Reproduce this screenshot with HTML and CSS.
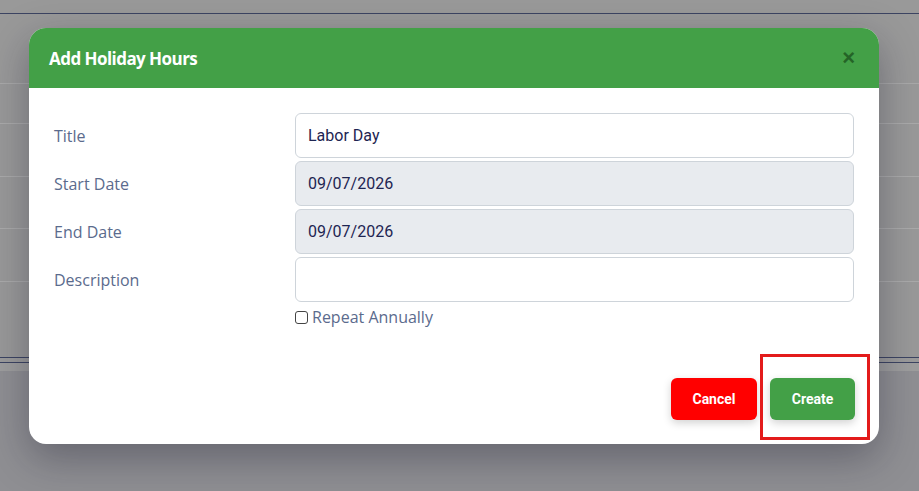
FILE: index.html
```html
<!DOCTYPE html>
<html lang="en">
<head>
<meta charset="utf-8">
<title>Add Holiday Hours</title>
<link rel="stylesheet" href="styles.css">
</head>
<body>
<div class="backdrop">
  <div class="bg-top"></div>
  <div class="bg-gap"></div>
  <div class="bg-row r1"></div>
  <div class="bg-row r2"></div>
  <div class="bg-row r3"></div>
  <div class="bg-row r4"></div>
  <div class="bg-row r5"></div>
  <div class="bg-foot"></div>
  <div class="bg-rest"></div>
</div>

<div class="modal">
  <div class="modal-header">
    <h1 class="modal-title">Add Holiday Hours</h1>
    <span class="close">&times;</span>
  </div>
  <div class="modal-body">
    <div class="form-grid">
      <label class="label">Title</label>
      <div class="input">Labor Day</div>
      <label class="label">Start Date</label>
      <div class="input disabled">09/07/2026</div>
      <label class="label">End Date</label>
      <div class="input disabled">09/07/2026</div>
      <label class="label">Description</label>
      <div class="input"></div>
      <span></span>
      <div class="check-row"><span class="checkbox"></span><span class="check-label">Repeat Annually</span></div>
    </div>
  </div>
  <div class="modal-footer">
    <button class="btn btn-cancel">Cancel</button>
    <button class="btn btn-create">Create</button>
  </div>
</div>

<div class="highlight"></div>
</body>
</html>
```

FILE: styles.css
```css
* { box-sizing: border-box; }
html, body { margin: 0; padding: 0; }
body {
  width: 919px;
  height: 491px;
  overflow: hidden;
  background: #8f8f93;
  font-family: "Open Sans", "Noto Sans", sans-serif;
  position: relative;
}

.backdrop { display: flex; flex-direction: column; }
.bg-top { height: 14px; background: #999999; border-bottom: 1px solid #3c4462; }
.bg-gap { height: 70px; background: #999999; border-bottom: 1px solid #a9a9a9; }
.bg-row { background: #999999; border-bottom: 1px solid #aaaaaa; }
.r1 { height: 40px; }
.r2 { height: 53px; }
.r3 { height: 52px; }
.r4 { height: 53px; }
.r5 { height: 76px; border-bottom: 1px solid #3c4462; }
.bg-foot { height: 5px; background: #9b9b9b; border-bottom: 1px solid #3c4462; }
.bg-rest { height: 8px; background: #9e9e9e; }

.modal {
  position: absolute;
  left: 29px;
  top: 28px;
  width: 850px;
  height: 416px;
  background: #ffffff;
  border-radius: 17px;
  box-shadow: 0 14px 40px rgba(20, 20, 40, 0.35);
  display: flex;
  flex-direction: column;
  overflow: hidden;
}

.modal-header {
  height: 60px;
  background: #43a047;
  display: flex;
  align-items: center;
  justify-content: space-between;
  padding: 0 24px 0 20px;
}
.modal-title {
  margin: 0;
  color: #ffffff;
  font-family: "Open Sans", sans-serif;
  font-size: 17px;
  font-weight: 700;
  letter-spacing: -0.55px;
}
.close {
  color: #1f5a22;
  font-family: "Liberation Sans", sans-serif;
  font-size: 22px;
  font-weight: 700;
  line-height: 1;
  opacity: 0.85;
}

.modal-body { padding: 25px 25px 0 25px; }
.form-grid {
  display: grid;
  grid-template-columns: 241px 559px;
  row-gap: 3px;
  align-items: center;
}
.label {
  color: #5b6b8d;
  font-size: 16px;
}
.input {
  height: 45px;
  border: 1px solid #ced4da;
  border-radius: 6px;
  background: #ffffff;
  padding: 0 12px;
  display: flex;
  align-items: center;
  font-family: "Roboto", sans-serif;
  font-size: 16px;
  color: #1e2552;
}
.input.disabled { background: #e8ebef; }

.check-row {
  display: flex;
  align-items: center;
  gap: 4px;
  padding-top: 1px;
}
.checkbox {
  width: 13px;
  height: 13px;
  border: 1px solid #444;
  border-radius: 3px;
  background: #fff;
}
.check-label {
  color: #5b6b8d;
  font-size: 16px;
}

.modal-footer {
  margin-top: auto;
  display: flex;
  justify-content: flex-end;
  gap: 13px;
  padding: 0 24px 24px 0;
}
.btn {
  height: 42px;
  border: none;
  border-radius: 6px;
  color: #ffffff;
  font-family: "Roboto", sans-serif;
  font-size: 14px;
  font-weight: 700;
  box-shadow: 0 3px 8px rgba(0, 0, 0, 0.18);
}
.btn-cancel { width: 86px; background: #ff0000; }
.btn-create { width: 85px; background: #43a047; }

.highlight {
  position: absolute;
  left: 760px;
  top: 354px;
  width: 110px;
  height: 86px;
  border: 3px solid #e31b1b;
}
```
